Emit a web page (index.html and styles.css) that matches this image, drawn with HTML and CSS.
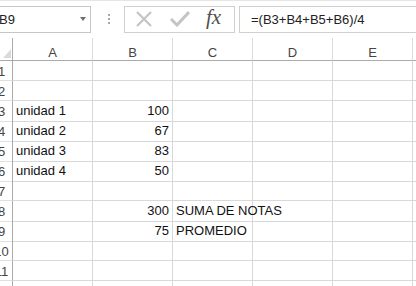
FILE: index.html
```html
<!DOCTYPE html>
<html lang="es">

<head>
    <meta charset="UTF-8">
    <meta name="viewport" content="width=device-width, initial-scale=1.0">
    <title>Promedio de notas</title>
    <link rel="stylesheet" href="styles.css">
</head>

<body>
    <div class="toolbar">
        <div class="name-box">
            <span class="name">B9</span>
            <svg class="drop" width="6" height="4" viewBox="0 0 6 4"><path d="M0 0h6L3 4z" fill="#6f6f6f"/></svg>
        </div>
        <div class="grip"><i></i><i></i><i></i></div>
        <div class="fx-buttons">
            <svg class="btn" width="18" height="16" viewBox="0 0 18 16">
                <path d="M2 1L16 15M16 1L2 15" stroke="#c4c4c4" stroke-width="2.2" fill="none"/>
            </svg>
            <svg class="btn" width="20" height="16" viewBox="0 0 20 16">
                <path d="M1 8L7 14L19 1" stroke="#c4c4c4" stroke-width="3" fill="none"/>
            </svg>
            <span class="fx">fx</span>
        </div>
        <div class="formula">=(B3+B4+B5+B6)/4</div>
    </div>

    <div class="sheet">
        <div class="row head">
            <div class="rh corner"><svg width="8" height="9" viewBox="0 0 8 9"><path d="M8 0V9H0z" fill="#dadada"/></svg></div>
            <div class="ch">A</div>
            <div class="ch">B</div>
            <div class="ch">C</div>
            <div class="ch">D</div>
            <div class="ch">E</div>
            <div class="ch"></div>
        </div>
        <div class="row"><div class="rh">1</div><div class="c"></div><div class="c"></div><div class="c"></div><div class="c"></div><div class="c"></div><div class="c"></div></div>
        <div class="row"><div class="rh">2</div><div class="c"></div><div class="c"></div><div class="c"></div><div class="c"></div><div class="c"></div><div class="c"></div></div>
        <div class="row"><div class="rh">3</div><div class="c">unidad 1</div><div class="c num">100</div><div class="c"></div><div class="c"></div><div class="c"></div><div class="c"></div></div>
        <div class="row"><div class="rh">4</div><div class="c">unidad 2</div><div class="c num">67</div><div class="c"></div><div class="c"></div><div class="c"></div><div class="c"></div></div>
        <div class="row"><div class="rh">5</div><div class="c">unidad 3</div><div class="c num">83</div><div class="c"></div><div class="c"></div><div class="c"></div><div class="c"></div></div>
        <div class="row"><div class="rh">6</div><div class="c">unidad 4</div><div class="c num">50</div><div class="c"></div><div class="c"></div><div class="c"></div><div class="c"></div></div>
        <div class="row"><div class="rh">7</div><div class="c"></div><div class="c"></div><div class="c"></div><div class="c"></div><div class="c"></div><div class="c"></div></div>
        <div class="row"><div class="rh">8</div><div class="c"></div><div class="c num">300</div><div class="c">SUMA DE NOTAS</div><div class="c"></div><div class="c"></div><div class="c"></div></div>
        <div class="row"><div class="rh">9</div><div class="c"></div><div class="c num">75</div><div class="c">PROMEDIO</div><div class="c"></div><div class="c"></div><div class="c"></div></div>
        <div class="row"><div class="rh">10</div><div class="c"></div><div class="c"></div><div class="c"></div><div class="c"></div><div class="c"></div><div class="c"></div></div>
        <div class="row"><div class="rh">11</div><div class="c"></div><div class="c"></div><div class="c"></div><div class="c"></div><div class="c"></div><div class="c"></div></div>
        <div class="row"><div class="rh"></div><div class="c"></div><div class="c"></div><div class="c"></div><div class="c"></div><div class="c"></div><div class="c"></div></div>
    </div>
</body>

</html>
```

FILE: styles.css
```css
body {
    margin: 0;
    width: 416px;
    height: 286px;
    overflow: hidden;
    background: #fff;
    font-family: "Liberation Sans", Arial, sans-serif;
    font-size: 13px;
    color: #222;
}

.toolbar {
    display: flex;
    align-items: center;
    height: 33px;
    border-top: 1px solid #e6e6e6;
    box-sizing: border-box;
    padding-top: 4px;
}

.name-box {
    display: flex;
    align-items: center;
    justify-content: space-between;
    margin-left: -3px;
    width: 94px;
    height: 27px;
    padding: 0 4px 0 2px;
    box-sizing: border-box;
    border: 1px solid #c6c6c6;
    border-left: none;
}

.name {
    font-size: 13px;
    color: #222;
}

.grip {
    display: flex;
    flex-direction: column;
    gap: 2px;
    margin-left: 17px;
    width: 2px;
}

.grip i {
    display: block;
    width: 2px;
    height: 2px;
    background: #a8a8a8;
}

.fx-buttons {
    display: flex;
    align-items: center;
    margin-left: 14px;
    width: 111px;
    height: 27px;
    box-sizing: border-box;
    border: 1px solid #d0d0d0;
    padding-left: 10px;
}

.btn {
    margin-right: 17px;
}

.fx {
    font-family: "Liberation Serif", "Times New Roman", serif;
    font-style: italic;
    font-size: 21px;
    color: #505050;
    margin-top: -3px;
    margin-left: -1px;
}

.formula {
    flex: 1;
    margin-left: 4px;
    height: 27px;
    line-height: 25px;
    box-sizing: border-box;
    border: 1px solid #d0d0d0;
    border-right: none;
    padding-left: 11px;
    font-size: 13px;
    color: #222;
}

.sheet {
    margin-top: 5px;
    margin-left: -9px;
}

.row {
    display: grid;
    grid-template-columns: 22px repeat(6, 80px);
    height: 20px;
}

.row.head {
    height: 23px;
}

.rh {
    display: flex;
    align-items: center;
    justify-content: center;
    border-right: 1px solid #ababab;
    border-bottom: 1px solid #e0e0e0;
    color: #444;
    box-sizing: border-box;
    padding-top: 1px;
}

.corner {
    align-items: flex-end;
    justify-content: flex-end;
    padding: 0 1px 2px 0;
    border-bottom: 1px solid #ababab;
}

.ch {
    display: flex;
    align-items: center;
    justify-content: center;
    border-right: 1px solid #dcdcdc;
    border-bottom: 1px solid #ababab;
    color: #444;
    box-sizing: border-box;
    padding-top: 7px;
}

.c {
    border-right: 1px solid #d8d8d8;
    border-bottom: 1px solid #d8d8d8;
    box-sizing: border-box;
    padding: 0 3px;
    line-height: 20px;
    white-space: nowrap;
    color: #111;
}

.num {
    text-align: right;
}
```
